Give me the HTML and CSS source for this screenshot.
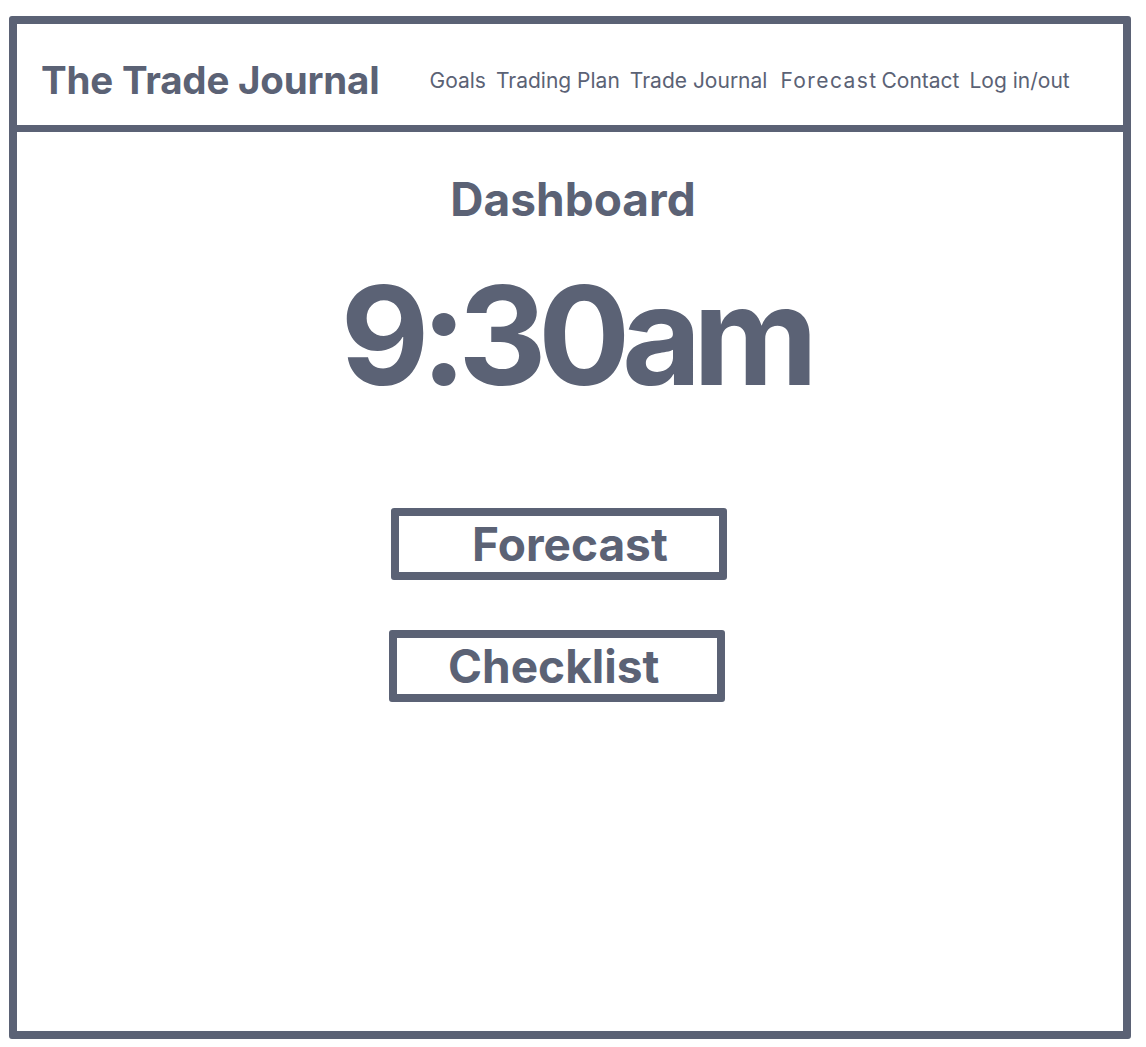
FILE: index.html
```html
<!DOCTYPE html>
<html>
<head>
<meta charset="utf-8">
<link rel="stylesheet" href="styles.css">
</head>
<body>
<div class="frame">
  <header class="topbar">
    <div class="brand">The Trade Journal</div>
    <nav class="nav">
      <a>Goals</a>
      <a>Trading Plan</a>
      <a>Trade Journal</a>
      <a class="wide">Forecast</a>
      <a>Contact</a>
      <a>Log in/out</a>
    </nav>
  </header>
  <main class="content">
    <h1 class="title">Dashboard</h1>
    <div class="clock">9:30am</div>
    <div class="actions">
      <div class="btn btn-forecast">Forecast</div>
      <div class="btn btn-checklist">Checklist</div>
    </div>
  </main>
</div>
</body>
</html>
```
FILE: styles.css
```css
html, body {
  margin: 0;
  padding: 0;
  background: #ffffff;
}
body {
  font-family: Inter, "Noto Sans", sans-serif;
  color: #5b6275;
  padding: 16px 15px 8px 9px;
}
.frame {
  width: 1122px;
  height: 1023px;
  box-sizing: border-box;
  border: 8px solid #5b6275;
  border-radius: 3px;
  display: flex;
  flex-direction: column;
}
.topbar {
  height: 90px;
  border-bottom: 7px solid #5b6275;
  display: flex;
  align-items: center;
  padding: 11px 0 0 24px;
  box-sizing: content-box;
}
.brand {
  font-size: 38.5px;
  font-weight: 700;
  letter-spacing: -0.2px;
  margin-right: 50px;
}
.nav {
  display: flex;
  gap: 10px;
  font-size: 21px;
}
.nav a.wide {
  letter-spacing: 1.4px;
  margin-left: 3px;
  margin-right: -6px;
}
.content {
  flex: 1;
  display: flex;
  flex-direction: column;
  align-items: center;
}
.title {
  margin: 44px 0 0 6px;
  font-size: 46px;
  font-weight: 700;
  line-height: 1;
}
.clock {
  margin-top: 45px;
  font-size: 137px;
  font-weight: 700;
  line-height: 1;
  letter-spacing: -8.5px;
  margin-left: 10px;
}
.actions {
  margin-top: 104px;
  display: flex;
  flex-direction: column;
  align-items: center;
  gap: 50px;
}
.btn {
  width: 336px;
  height: 72px;
  box-sizing: border-box;
  border: 8px solid #5b6275;
  border-radius: 3px;
  font-size: 46px;
  font-weight: 700;
  display: flex;
  align-items: center;
}
.btn-forecast {
  margin-right: 22px;
  padding-left: 73px;
}
.btn-checklist {
  margin-right: 26px;
  padding-left: 51px;
}
```
